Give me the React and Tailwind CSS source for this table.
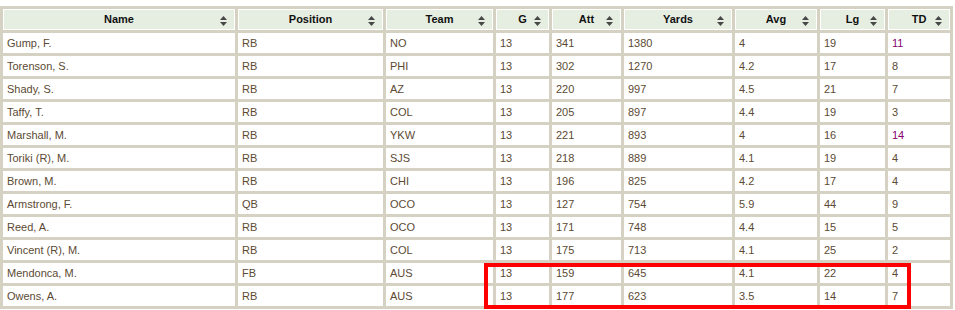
const columns = [
  { key: 'name', label: 'Name', w: 'w-[232px]' },
  { key: 'pos', label: 'Position', w: 'w-[145px]' },
  { key: 'team', label: 'Team', w: 'w-[107px]' },
  { key: 'g', label: 'G', w: 'w-[53px]' },
  { key: 'att', label: 'Att', w: 'w-[69px]' },
  { key: 'yds', label: 'Yards', w: 'w-[108px]' },
  { key: 'avg', label: 'Avg', w: 'w-[82px]' },
  { key: 'lg', label: 'Lg', w: 'w-[65px]' },
  { key: 'td', label: 'TD', w: 'w-[62px]' },
];

const rows = [
  ['Gump, F.', 'RB', 'NO', 13, 341, 1380, '4', 19, 11],
  ['Torenson, S.', 'RB', 'PHI', 13, 302, 1270, '4.2', 17, 8],
  ['Shady, S.', 'RB', 'AZ', 13, 220, 997, '4.5', 21, 7],
  ['Taffy, T.', 'RB', 'COL', 13, 205, 897, '4.4', 19, 3],
  ['Marshall, M.', 'RB', 'YKW', 13, 221, 893, '4', 16, 14],
  ['Toriki (R), M.', 'RB', 'SJS', 13, 218, 889, '4.1', 19, 4],
  ['Brown, M.', 'RB', 'CHI', 13, 196, 825, '4.2', 17, 4],
  ['Armstrong, F.', 'QB', 'OCO', 13, 127, 754, '5.9', 44, 9],
  ['Reed, A.', 'RB', 'OCO', 13, 171, 748, '4.4', 15, 5],
  ['Vincent (R), M.', 'RB', 'COL', 13, 175, 713, '4.1', 25, 2],
  ['Mendonca, M.', 'FB', 'AUS', 13, 159, 645, '4.1', 22, 4],
  ['Owens, A.', 'RB', 'AUS', 13, 177, 623, '3.5', 14, 7],
];

function SortIcon() {
  return (
    <svg width="7" height="10" viewBox="0 0 7 10" className="absolute right-[7px] top-[6px]">
      <polygon points="0,4 3.5,0 7,4" fill="#474747" />
      <polygon points="0,6 7,6 3.5,10" fill="#474747" />
    </svg>
  );
}

export default function App() {
  return (
    <div className="relative w-[955px] h-[310px] bg-white overflow-hidden pt-[6px] font-['Liberation_Sans',Arial,sans-serif]">
      <table className="table-fixed w-[953px] border-separate border-spacing-[3px] bg-[#d5d1c3] text-[11px]">
        <colgroup>
          {columns.map((c) => (
            <col key={c.key} className={c.w} />
          ))}
        </colgroup>
        <thead>
          <tr>
            {columns.map((c) => (
              <th
                key={c.key}
                className="relative h-[21px] p-0 border border-white bg-[#e6eee1] text-center font-bold text-[#111] leading-[19px]"
              >
                {c.label}
                <SortIcon />
              </th>
            ))}
          </tr>
        </thead>
        <tbody>
          {rows.map((r) => (
            <tr key={r[0]}>
              {r.map((v, i) => (
                <td
                  key={i}
                  className={`h-[20px] p-0 pl-[4px] bg-white leading-[20px] whitespace-nowrap ${
                    i === 8 && v >= 10 ? 'text-[#85006e]' : 'text-[#5c4a33]'
                  }`}
                >
                  {v}
                </td>
              ))}
            </tr>
          ))}
        </tbody>
      </table>
      <div className="absolute left-[484px] top-[263px] w-[427px] h-[46px] border-[4px] border-[#ff0000]" />
    </div>
  );
}
